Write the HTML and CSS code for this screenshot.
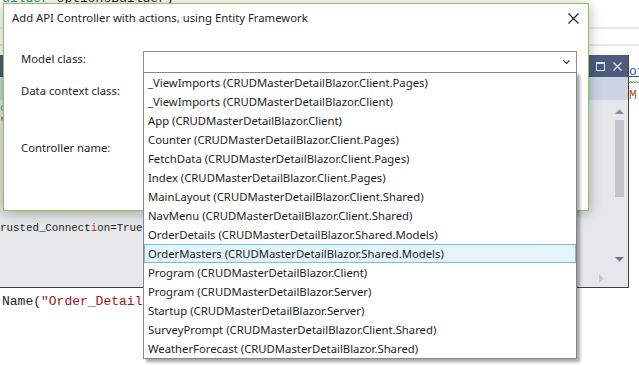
FILE: index.html
```html
<!DOCTYPE html>
<html lang="en">
<head>
  <meta charset="UTF-8">
  <title>Add API Controller</title>
  <link rel="stylesheet" href="styles.css">
</head>
<body>

  <div class="editor">
    <div class="topline">
      <div class="code"><span class="type">uilder</span> optionsBuilder)</div>
    </div>
    <div class="curline"></div>

    <div class="split">
      <div class="peek">
        <div class="peek-head">
          <svg width="9" height="9" viewBox="0 0 9 9"><rect x="0.5" y="0.5" width="8" height="8" fill="none" stroke="#dfe3ec"/><rect x="0" y="0" width="9" height="2" fill="#dfe3ec"/></svg>
          <svg width="9" height="9" viewBox="0 0 9 9"><path d="M0.5 0.5l8 8M8.5 0.5l-8 8" stroke="#dfe3ec" stroke-width="1.4"/></svg>
        </div>
        <div class="peek-bar"></div>
        <div class="peek-main">
          <div class="peek-code">
            <div class="cl"><span class="cyan">o</span>ptionsBuilder.UseSqlServer(</div>
            <div class="cl"><span class="red">"</span>Server=(localdb)\mssqllocaldb;</div>
            <div class="cl conn">rusted_Connect<span class="red">i</span>on=True</div>
          </div>
          <div class="vscroll">
            <svg width="9" height="5" viewBox="0 0 9 5"><path d="M0 5L4.5 0.5 9 5z" fill="#868999"/></svg>
            <div class="thumb"></div>
            <svg class="down" width="9" height="5" viewBox="0 0 9 5"><path d="M0 0h9L4.5 4.5z" fill="#717585"/></svg>
          </div>
        </div>
        <div class="hscroll">
          <svg width="5" height="9" viewBox="0 0 5 9"><path d="M0 0l4.5 4.5L0 9z" fill="#c6c7cc"/></svg>
          <div class="corner"></div>
        </div>
      </div>

      <div class="side">
        <div class="code link">of</div>
        <svg class="squiggle" width="12" height="4" viewBox="0 0 12 4"><path d="M0 3l1.5-2 1.5 2 1.5-2 1.5 2 1.5-2 1.5 2 1.5-2 1.5 2" fill="none" stroke="#5fa83c"/></svg>
        <div class="code member">M</div>
      </div>
    </div>

    <div class="code tail">Name(<span class="str">"Order_Details"</span>);</div>
  </div>

  <div class="dialog">
    <div class="dialog-title">
      <span>Add API Controller with actions, using Entity Framework</span>
      <svg width="11" height="11" viewBox="0 0 11 11"><path d="M0.5 0.5l10 10M10.5 0.5l-10 10" stroke="#1e1e1e" stroke-width="1.1"/></svg>
    </div>

    <div class="form">
      <div class="field">
        <div class="label">Model class:</div>
        <div class="combo">
          <svg width="7" height="4" viewBox="0 0 7 4"><path d="M0.5 0.5l3 3 3-3" fill="none" stroke="#333" stroke-width="1.1"/></svg>
          <ul class="droplist">
            <li>_ViewImports (CRUDMasterDetailBlazor.Client.Pages)</li>
            <li>_ViewImports (CRUDMasterDetailBlazor.Client)</li>
            <li>App (CRUDMasterDetailBlazor.Client)</li>
            <li>Counter (CRUDMasterDetailBlazor.Client.Pages)</li>
            <li>FetchData (CRUDMasterDetailBlazor.Client.Pages)</li>
            <li>Index (CRUDMasterDetailBlazor.Client.Pages)</li>
            <li>MainLayout (CRUDMasterDetailBlazor.Client.Shared)</li>
            <li>NavMenu (CRUDMasterDetailBlazor.Client.Shared)</li>
            <li>OrderDetails (CRUDMasterDetailBlazor.Shared.Models)</li>
            <li class="sel">OrderMasters (CRUDMasterDetailBlazor.Shared.Models)</li>
            <li>Program (CRUDMasterDetailBlazor.Client)</li>
            <li>Program (CRUDMasterDetailBlazor.Server)</li>
            <li>Startup (CRUDMasterDetailBlazor.Server)</li>
            <li>SurveyPrompt (CRUDMasterDetailBlazor.Client.Shared)</li>
            <li>WeatherForecast (CRUDMasterDetailBlazor.Shared)</li>
          </ul>
        </div>
      </div>
      <div class="field ctx">
        <div class="label">Data context class:</div>
      </div>
      <div class="field name">
        <div class="label">Controller name:</div>
      </div>
    </div>
  </div>

</body>
</html>
```
FILE: styles.css
```css
body {
  margin: 0;
  width: 639px;
  height: 365px;
  overflow: hidden;
  position: relative;
  background-color: white;
  font-family: "Noto Sans", sans-serif;
  font-size: 11.3px;
  color: #1e1e1e;
}

/* editor behind the dialog */
.code {
  font-family: "Liberation Mono", monospace;
  font-size: 13px;
  line-height: 16px;
  white-space: pre;
  color: #1e1e1e;
}

.topline {
  height: 3px;
  overflow: hidden;
  padding-left: 2px;
}

.topline .code {
  margin-top: -9px;
}

.type {
  color: #2b91af;
}

.curline {
  margin-top: 24px;
  height: 19px;
  box-sizing: border-box;
  border-top: 2px solid #e8e8ef;
  border-bottom: 2px solid #e8e8ef;
}

.split {
  display: flex;
  margin-top: 9px;
}

.peek {
  width: 629px;
  height: 233px;
  box-sizing: border-box;
  border-right: 1px solid #3f3f46;
  border-bottom: 1px solid #3f3f46;
  background-color: #e6e7ea;
  display: flex;
  flex-direction: column;
  flex-shrink: 0;
}

.peek-head {
  height: 22px;
  background-color: #4d5c7e;
  display: flex;
  justify-content: flex-end;
  align-items: center;
  gap: 8px;
  padding-right: 6px;
}

.peek-bar {
  height: 23px;
  background-color: #ccd4e3;
}

.peek-main {
  flex: 1;
  display: flex;
  min-height: 0;
}

.peek-code {
  flex: 1;
  overflow: hidden;
  font-family: "Liberation Mono", monospace;
  font-size: 10.8px;
  line-height: 14px;
  padding-top: 1px;
}

.cl {
  white-space: pre;
}

.cl.conn {
  margin-top: 92px;
}

.cyan {
  color: #2bb0c0;
}

.red {
  color: #c8282d;
}

.vscroll {
  width: 17px;
  display: flex;
  flex-direction: column;
  align-items: center;
  padding-top: 9px;
  padding-bottom: 8px;
  box-sizing: border-box;
}

.thumb {
  width: 9px;
  height: 77px;
  margin-top: 6px;
  background-color: #c2c3c9;
}

.vscroll .down {
  margin-top: auto;
}

.hscroll {
  height: 17px;
  display: flex;
  justify-content: flex-end;
  align-items: center;
}

.corner {
  width: 17px;
  height: 17px;
  margin-left: 7px;
}

.side {
  flex: 1;
  overflow: hidden;
}

.side .link {
  margin-top: 9px;
  color: #1a4fd6;
  text-decoration: underline;
}

.squiggle {
  display: block;
}

.side .member {
  margin-top: 4px;
  color: #b0561e;
}

.tail {
  margin-top: 6px;
  padding-left: 2px;
}

.str {
  color: #a31515;
}

/* dialog */
.dialog {
  position: absolute;
  left: 3px;
  top: 3px;
  width: 586px;
  height: 208px;
  box-sizing: border-box;
  border: 1px solid #92c353;
  background-color: white;
  box-shadow: 0 2px 12px rgba(0, 0, 0, 0.3);
}

.dialog-title {
  display: flex;
  justify-content: space-between;
  align-items: center;
  line-height: 16px;
  padding: 6px 9px 0 8px;
}

.form {
  margin-top: 25px;
  padding: 0 11px 0 17px;
}

.field {
  display: flex;
  align-items: flex-start;
  height: 22px;
  line-height: 16px;
}

.field.ctx {
  margin-top: 10px;
}

.field.name {
  margin-top: 35px;
}

.label {
  width: 122px;
  flex-shrink: 0;
}

.combo {
  flex: 1;
  height: 22px;
  box-sizing: border-box;
  border: 1px solid #8e8f94;
  position: relative;
  display: flex;
  justify-content: flex-end;
  align-items: center;
  padding-right: 6px;
}

.droplist {
  position: absolute;
  top: 20px;
  left: -1px;
  right: -1px;
  margin: 0;
  padding: 0;
  list-style: none;
  background-color: white;
  border: 1px solid #828790;
  box-shadow: 3px 3px 3px rgba(0, 0, 0, 0.35);
}

.droplist li {
  height: 19px;
  line-height: 19px;
  padding-left: 4px;
  white-space: nowrap;
}

.droplist li.sel {
  background-color: #e5f3fb;
  box-shadow: inset 0 0 0 1px #70c0e7;
}
```
